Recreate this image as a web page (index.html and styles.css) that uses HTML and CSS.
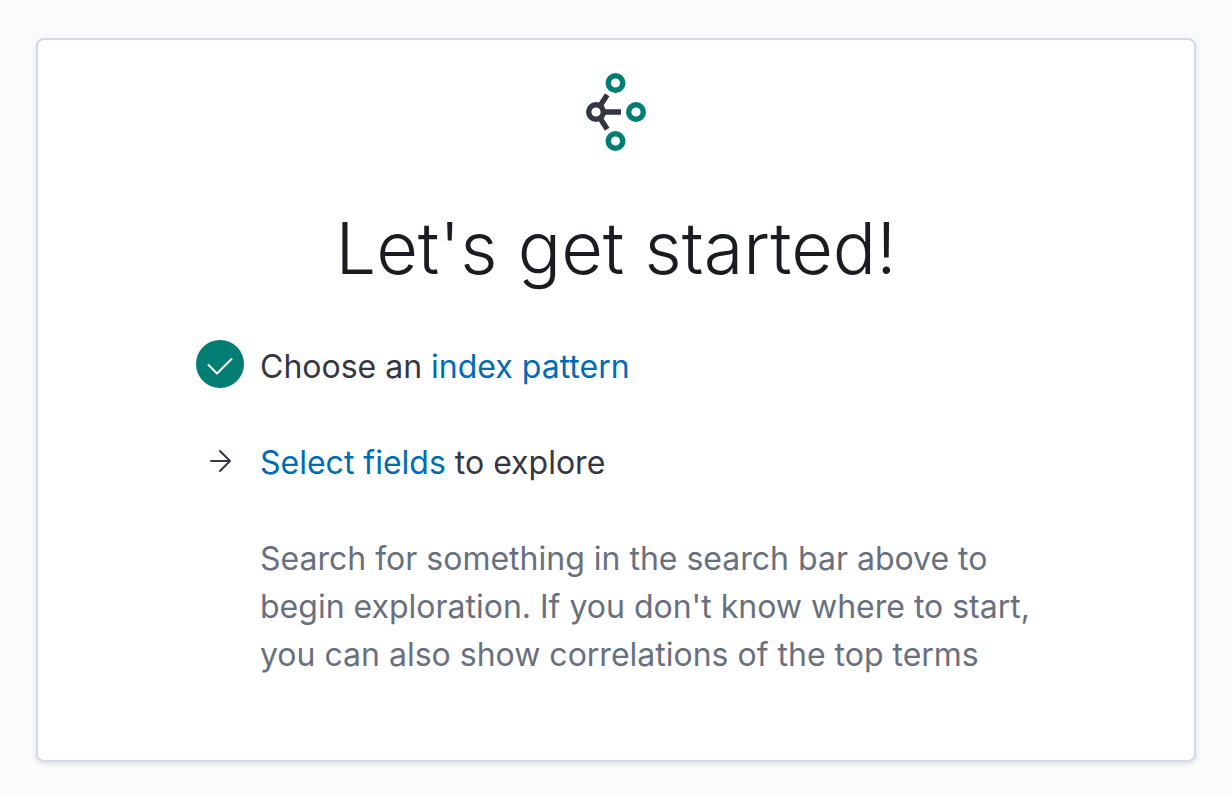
FILE: index.html
```
<!DOCTYPE html>
<html lang="en">
<head>
<meta charset="utf-8">
<meta name="viewport" content="width=device-width, initial-scale=1">
<title>Graph</title>
<link rel="stylesheet" href="styles.css">
</head>
<body>
<main class="panel">
  <svg class="logo" viewBox="0 0 64 80" aria-hidden="true">
    <g fill="none" stroke-width="5.4">
      <path class="logo-dark" d="M18 40h19M16 34l7.200-11.200M16 46l7.200 11.200"/>
      <circle class="logo-dark" cx="12" cy="40" r="7.300"/>
      <circle class="logo-green" cx="31.500" cy="11" r="7.300"/>
      <circle class="logo-green" cx="52" cy="40" r="7.300"/>
      <circle class="logo-green" cx="31.500" cy="69" r="7.300"/>
    </g>
  </svg>
  <h1 class="title">Let's get started!</h1>
  <ul class="steps">
    <li class="step">
      <span class="step-icon step-icon-done">
        <svg class="icon" viewBox="0 0 32 32" aria-hidden="true"><path d="M4.500 17l8.500 8.500L27.500 11"/></svg>
      </span>
      <p class="step-text">Choose an <a class="link" href="#">index pattern</a></p>
    </li>
    <li class="step">
      <span class="step-icon">
        <svg class="icon" viewBox="0 0 32 32" aria-hidden="true"><path d="M7 17h19M16 7l10 10-10 10"/></svg>
      </span>
      <p class="step-text"><a class="link" href="#">Select fields</a> to explore</p>
    </li>
  </ul>
  <p class="hint">Search for something in the search bar above to begin exploration. If you don't know where to start, you can also show correlations of the top terms</p>
</main>
</body>
</html>
```
FILE: styles.css
```
* {
  box-sizing: border-box;
}

body {
  margin: 0;
  padding: 38px 36px;
  background: #fafbfd;
  color: #343741;
  font: 32px/48px Inter, sans-serif;
}

.panel {
  display: flex;
  flex-direction: column;
  padding: 32px 158px 81px;
  background: #fff;
  border: 2px solid #d3dae6;
  border-radius: 8px;
  box-shadow: 0 2px 4px rgba(152, 162, 179, 0.3);
}

.logo {
  align-self: center;
  width: 64px;
  height: 80px;
}

.logo-dark {
  stroke: #343741;
}

.logo-green {
  stroke: #017d73;
}

.title {
  margin: 48px 0 44px;
  color: #1a1c21;
  font-size: 72px;
  font-weight: 350;
  line-height: 96px;
  text-align: center;
}

.steps {
  display: grid;
  gap: 45px;
  margin: 0 0 48px;
  padding: 0;
  list-style: none;
}

.step {
  display: flex;
  gap: 16px;
}

.step-icon {
  display: grid;
  flex: none;
  place-items: center;
  width: 48px;
  height: 48px;
}

.step-icon-done {
  background: #017d73;
  border-radius: 50%;
  color: #fff;
}

.icon {
  width: 32px;
  height: 32px;
  fill: none;
  stroke: currentColor;
  stroke-width: 2;
  stroke-linecap: round;
  stroke-linejoin: round;
}

.step-text {
  margin: 0;
  padding-top: 3px;
}

.link {
  color: #006bb4;
  text-decoration: none;
}

.hint {
  margin: 0 0 0 64px;
  color: #69707d;
}
```
